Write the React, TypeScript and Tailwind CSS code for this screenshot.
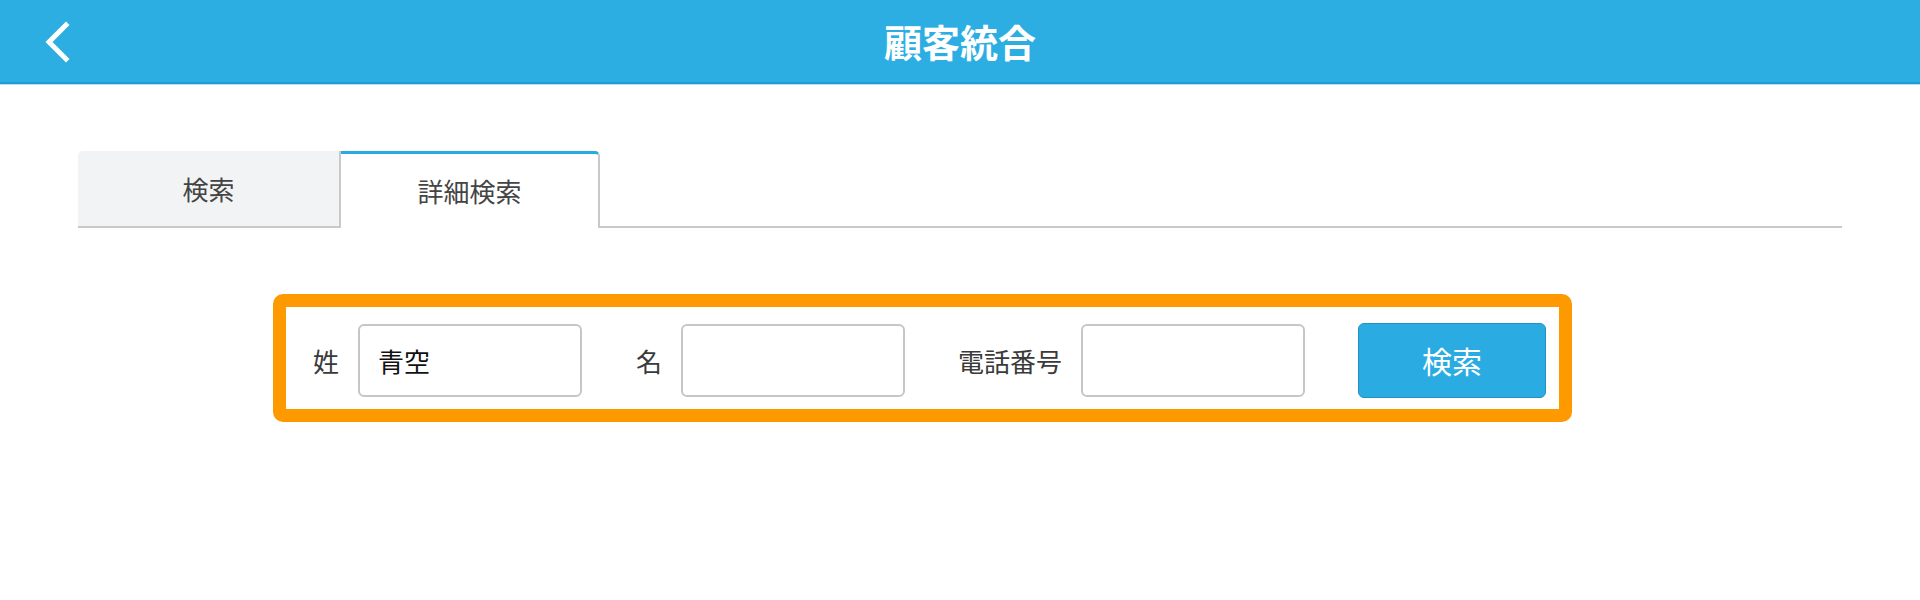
import { useState } from "react";

const FONT = { fontFamily: '"Noto Sans CJK JP", "Noto Sans", sans-serif' };

const Field = ({ label, value, className }: { label: string; value?: string; className?: string }) => (
    <div className={`flex items-center ${className ?? ""}`}>
        <span className="text-[26px] leading-none text-[#3a3a3a]">{label}</span>
        <input
            defaultValue={value}
            className="ml-[19px] h-[73px] w-[224px] rounded-[6px] border-2 border-[#c6c6c6] bg-white pl-[18px] text-[26px] text-[#111] outline-none"
            style={FONT}
        />
    </div>
);

export default function App() {
    const [tab, setTab] = useState(1);

    return (
        <div className="min-h-[600px] bg-white" style={FONT}>
            <header className="grid h-[84px] grid-cols-[1fr_auto_1fr] items-center border-b-2 border-[#1c9dd5] bg-[#2caee2] shadow-[0_1px_0_#b5e1f5]">
                <button className="ml-[42px] flex h-[44px] w-[30px] items-center justify-center">
                    <svg width="30" height="44" viewBox="0 0 30 44" fill="none">
                        <polyline points="24,6 7,23 24,40" stroke="white" strokeWidth="5" strokeLinecap="square" strokeLinejoin="miter" />
                    </svg>
                </button>
                <h1 className="text-[38px] font-bold leading-none text-white">顧客統合</h1>
                <div />
            </header>

            <div className="mx-[78px] mt-[67px]">
                <div className="flex items-end border-b-2 border-[#c9c9c9]">
                    <button
                        onClick={() => setTab(0)}
                        className="flex h-[75px] w-[263px] items-center justify-center rounded-tl-[5px] border-r-2 border-[#c9c9c9] bg-[#f2f3f4] text-[26px] text-[#444]"
                    >
                        検索
                    </button>
                    <button
                        onClick={() => setTab(1)}
                        className="-mb-[2px] flex h-[77px] w-[259px] items-center justify-center rounded-tr-[5px] border-t-[3px] border-r-2 border-t-[#29abe2] border-r-[#c9c9c9] bg-white pb-[1px] text-[26px] text-[#444]"
                    >
                        詳細検索
                    </button>
                </div>
            </div>

            {tab >= 0 && (
                <div className="ml-[273px] mt-[66px] w-[1299px] rounded-[10px] border-[13px] border-[#ff9900]">
                    <div className="flex h-[102px] items-center pl-[27px] pt-[5px]">
                        <Field label="姓" value="青空" />
                        <Field label="名" className="ml-[54px]" />
                        <Field label="電話番号" className="ml-[53px]" />
                        <button className="ml-[53px] h-[75px] w-[188px] rounded-[6px] border border-[#2490c2] bg-[#2aace2] text-[30px] text-white">
                            検索
                        </button>
                    </div>
                </div>
            )}
        </div>
    );
}
